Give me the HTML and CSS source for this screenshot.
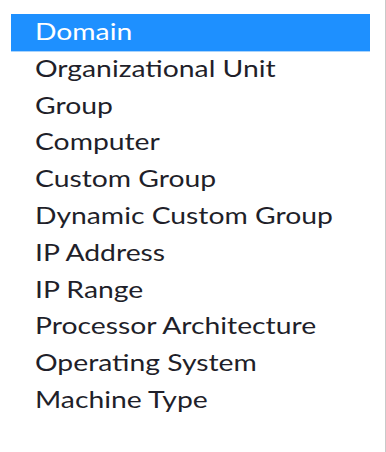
FILE: index.html
```html
<!DOCTYPE html>
<html lang="en">
<head>
    <meta charset="UTF-8">
    <title>Object type</title>
    <link rel="stylesheet" href="styles.css">
</head>
<body>
    <div class="dropdown">
        <ul class="options">
            <li class="selected"><span>Domain</span></li>
            <li><span>Organizational Unit</span></li>
            <li><span>Group</span></li>
            <li><span>Computer</span></li>
            <li><span>Custom Group</span></li>
            <li><span>Dynamic Custom Group</span></li>
            <li><span>IP Address</span></li>
            <li><span>IP Range</span></li>
            <li><span>Processor Architecture</span></li>
            <li><span>Operating System</span></li>
            <li><span>Machine Type</span></li>
        </ul>
    </div>
</body>
</html>
```

FILE: styles.css
```css
* {
    margin: 0;
    padding: 0;
    box-sizing: border-box;
}

body {
    background: #fff;
    font-family: Lato, 'Liberation Sans', sans-serif;
}

.dropdown {
    width: 386px;
    height: 452px;
    padding: 14px 15px 0 11px;
    border-right: 1px solid #c9c9c9;
}

.options {
    list-style: none;
}

.options li {
    height: 36.8px;
    line-height: 34px;
    padding: 0 0 2.8px 24px;
    font-size: 23px;
    color: #1f1f2a;
    white-space: nowrap;
}

/* the text is drawn a bit wider than normal Lato */
.options li span {
    display: inline-block;
    transform: scaleX(1.23);
    transform-origin: left center;
}

.options li.selected {
    background-color: #1e90ff;
    color: #fff;
    box-shadow: 0 1px 0 #a9d3fb;
}
```
